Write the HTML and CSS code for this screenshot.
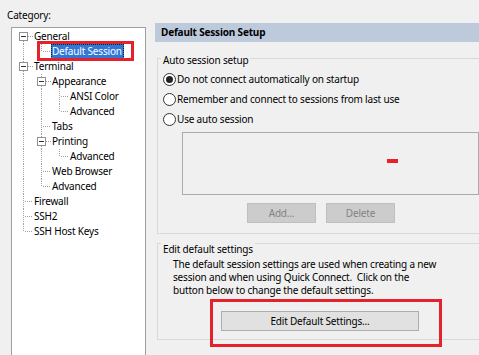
FILE: index.html
```html
<!DOCTYPE html>
<html>
<head>
<meta charset="utf-8">
<link rel="stylesheet" href="styles.css">
</head>
<body>
<div class="app">
  <div class="left">
    <div class="cat-label">Category:</div>
    <div class="tree">
      <div class="row"><span class="c xf"><span class="box"></span></span><span class="lbl">General</span></div>
      <div class="row"><span class="c v"></span><span class="c l"></span><span class="lbl sel">Default Session</span></div>
      <div class="row"><span class="c xm"><span class="box"></span></span><span class="lbl">Terminal</span></div>
      <div class="row"><span class="c v"></span><span class="c xm"><span class="box"></span></span><span class="lbl">Appearance</span></div>
      <div class="row"><span class="c v"></span><span class="c v"></span><span class="c t"></span><span class="lbl">ANSI Color</span></div>
      <div class="row"><span class="c v"></span><span class="c v"></span><span class="c l"></span><span class="lbl">Advanced</span></div>
      <div class="row"><span class="c v"></span><span class="c t"></span><span class="lbl">Tabs</span></div>
      <div class="row"><span class="c v"></span><span class="c xm"><span class="box"></span></span><span class="lbl">Printing</span></div>
      <div class="row"><span class="c v"></span><span class="c v"></span><span class="c l"></span><span class="lbl">Advanced</span></div>
      <div class="row"><span class="c v"></span><span class="c t"></span><span class="lbl">Web Browser</span></div>
      <div class="row"><span class="c v"></span><span class="c l"></span><span class="lbl">Advanced</span></div>
      <div class="row"><span class="c t"></span><span class="lbl">Firewall</span></div>
      <div class="row"><span class="c t"></span><span class="lbl">SSH2</span></div>
      <div class="row"><span class="c l"></span><span class="lbl">SSH Host Keys</span></div>
    </div>
  </div>
  <div class="right">
    <div class="header">Default Session Setup</div>
    <div class="group auto">
      <div class="legend">Auto session setup</div>
      <div class="radio first"><span class="rb on"></span><span>Do not connect automatically on startup</span></div>
      <div class="radio"><span class="rb"></span><span>Remember and connect to sessions from last use</span></div>
      <div class="radio"><span class="rb"></span><span>Use auto session</span></div>
      <div class="list"><span class="dash"></span></div>
      <div class="btns">
        <button class="btn dis" disabled>Add...</button>
        <button class="btn dis" disabled>Delete</button>
      </div>
    </div>
    <div class="group edit">
      <div class="legend">Edit default settings</div>
      <p class="desc">The default session settings are used when creating a new<br>session and when using Quick Connect.&nbsp; Click on the<br>button below to change the default settings.</p>
      <div class="editwrap"><button class="btn editbtn">Edit Default Settings...</button></div>
    </div>
  </div>
</div>
</body>
</html>
```
FILE: styles.css
```css
html, body {
  margin: 0;
  padding: 0;
}
body {
  background: #f0f0f0;
  font: 10px "Noto Sans", "Open Sans", sans-serif;
  letter-spacing: -0.18px;
  color: #000;
  width: 479px;
  height: 355px;
  overflow: hidden;
}
.app {
  display: flex;
  align-items: flex-start;
}
.left {
  width: 155px;
  flex: none;
  padding-top: 8px;
}
.cat-label {
  padding-left: 7px;
  line-height: 14px;
}
.tree {
  margin: 5px 0 0 11px;
  width: 135px;
  height: 340px;
  box-sizing: border-box;
  background: #fff;
  border: 1px solid #a0a0a0;
  padding: 1px 0 0 3px;
}
.row {
  display: flex;
  height: 15px;
  align-items: center;
}
.c {
  width: 18px;
  height: 15px;
  flex: none;
  display: flex;
  align-items: center;
  padding-left: 4px;
  box-sizing: border-box;
  background-repeat: no-repeat;
}
.v {
  background-image: repeating-linear-gradient(to bottom, #a0a0a0 0 1px, transparent 1px 2px);
  background-size: 1px 15px;
  background-position: 8px 0;
}
.t {
  background-image: repeating-linear-gradient(to bottom, #a0a0a0 0 1px, transparent 1px 2px),
                    repeating-linear-gradient(to right, #a0a0a0 0 1px, transparent 1px 2px);
  background-size: 1px 15px, 9px 1px;
  background-position: 8px 0, 10px 7px;
}
.l {
  background-image: repeating-linear-gradient(to bottom, #a0a0a0 0 1px, transparent 1px 2px),
                    repeating-linear-gradient(to right, #a0a0a0 0 1px, transparent 1px 2px);
  background-size: 1px 8px, 9px 1px;
  background-position: 8px 0, 10px 7px;
}
.xf {
  background-image: repeating-linear-gradient(to bottom, #a0a0a0 0 1px, transparent 1px 2px),
                    repeating-linear-gradient(to right, #a0a0a0 0 1px, transparent 1px 2px);
  background-size: 1px 3px, 5px 1px;
  background-position: 8px 12px, 13px 7px;
}
.xm {
  background-image: repeating-linear-gradient(to bottom, #a0a0a0 0 1px, transparent 1px 2px),
                    repeating-linear-gradient(to bottom, #a0a0a0 0 1px, transparent 1px 2px),
                    repeating-linear-gradient(to right, #a0a0a0 0 1px, transparent 1px 2px);
  background-size: 1px 3px, 1px 3px, 5px 1px;
  background-position: 8px 0, 8px 12px, 13px 7px;
}
.box {
  width: 9px;
  height: 9px;
  box-sizing: border-box;
  border: 1px solid #919191;
  background: #fff;
  display: flex;
  align-items: center;
  justify-content: center;
}
.box::after {
  content: "";
  width: 5px;
  height: 1px;
  background: #333;
}
.lbl {
  line-height: 15px;
  height: 15px;
  padding: 0 1px;
  white-space: nowrap;
}
.sel {
  position: relative;
  background: #3178d6;
  color: #fff;
  outline: 1px dotted #1a1a1a;
  outline-offset: -1px;
  padding: 0 2px 0 1px;
}
.sel::after {
  content: "";
  position: absolute;
  left: -14px;
  right: -10px;
  top: -3px;
  bottom: -2px;
  border: 3px solid #e4222c;
}
.right {
  flex: 1;
  min-width: 0;
  padding-top: 23px;
}
.header {
  height: 19px;
  line-height: 19px;
  background: #bdcadc;
  font-weight: bold;
  padding-left: 6px;
  white-space: nowrap;
}
.group {
  margin: 16px 0 0 2px;
  border: 1px solid #d9d9d9;
  border-right: none;
}
.group.edit {
  margin-top: 9px;
}
.legend {
  display: table;
  margin: -6px 0 0 3px;
  padding: 0 2px;
  background: #f0f0f0;
  line-height: 14px;
  white-space: nowrap;
}
.edit .legend {
  margin-top: -2px;
}
.radio {
  display: flex;
  align-items: center;
  gap: 1px;
  height: 20px;
  padding-left: 5px;
  white-space: nowrap;
}
.radio.first {
  margin-top: 2px;
}
.rb {
  width: 13px;
  height: 13px;
  flex: none;
  box-sizing: border-box;
  border: 1px solid #333;
  border-radius: 50%;
  background: #fff;
  display: flex;
  align-items: center;
  justify-content: center;
}
.rb.on::after {
  content: "";
  width: 7px;
  height: 7px;
  border-radius: 50%;
  background: #222;
}
.list {
  margin: 3px 0 0 24px;
  width: 297px;
  height: 63px;
  box-sizing: border-box;
  border: 1px solid #ababab;
  padding: 26px 0 0 204px;
}
.dash {
  display: block;
  width: 11px;
  height: 4px;
  background: #e8202a;
}
.btns {
  display: flex;
  gap: 10px;
  margin: 8px 0 0 89px;
  padding-bottom: 10px;
}
.btn {
  font: inherit;
  letter-spacing: inherit;
  padding: 0;
  height: 20px;
  box-sizing: border-box;
}
.dis {
  width: 69px;
  background: #cccccc;
  border: 1px solid #bfbfbf;
  color: #838383;
}
.desc {
  margin: 2px 0 0 15px;
  line-height: 13px;
  white-space: nowrap;
}
.editwrap {
  position: relative;
  display: inline-block;
  margin: 14px 0 8px 63px;
  vertical-align: top;
}
.editwrap::after {
  content: "";
  position: absolute;
  left: -11px;
  right: -23px;
  top: -12px;
  bottom: -16px;
  border: 3px solid #e4222c;
}
.editbtn {
  display: block;
  width: 198px;
  background: #e1e1e1;
  border: 1px solid #adadad;
  color: #000;
}
```
